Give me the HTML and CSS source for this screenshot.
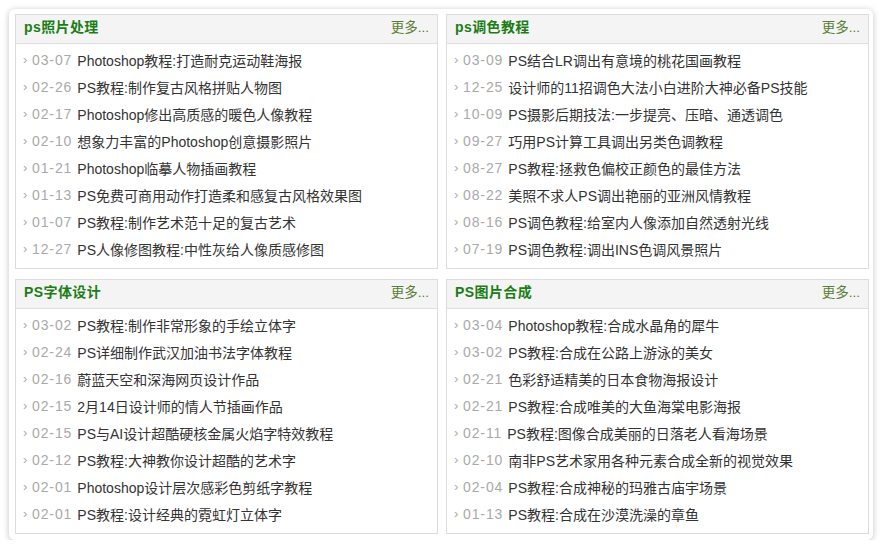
FILE: index.html
```html
<!DOCTYPE html>
<html lang="zh">
<head>
<meta charset="utf-8">
<title>PS教程</title>
<link rel="stylesheet" href="styles.css">
</head>
<body>
<div class="wrap">
  <section class="panel">
    <div class="head"><h2>ps照片处理</h2><a class="more">更多...</a></div>
    <ul class="list">
      <li><span class="arr">›</span><span class="date">03-07</span><span class="t">Photoshop教程:打造耐克运动鞋海报</span></li>
      <li><span class="arr">›</span><span class="date">02-26</span><span class="t">PS教程:制作复古风格拼贴人物图</span></li>
      <li><span class="arr">›</span><span class="date">02-17</span><span class="t">Photoshop修出高质感的暖色人像教程</span></li>
      <li><span class="arr">›</span><span class="date">02-10</span><span class="t">想象力丰富的Photoshop创意摄影照片</span></li>
      <li><span class="arr">›</span><span class="date">01-21</span><span class="t">Photoshop临摹人物插画教程</span></li>
      <li><span class="arr">›</span><span class="date">01-13</span><span class="t">PS免费可商用动作打造柔和感复古风格效果图</span></li>
      <li><span class="arr">›</span><span class="date">01-07</span><span class="t">PS教程:制作艺术范十足的复古艺术</span></li>
      <li><span class="arr">›</span><span class="date">12-27</span><span class="t">PS人像修图教程:中性灰给人像质感修图</span></li>
    </ul>
  </section>
  <section class="panel">
    <div class="head"><h2>ps调色教程</h2><a class="more">更多...</a></div>
    <ul class="list">
      <li><span class="arr">›</span><span class="date">03-09</span><span class="t">PS结合LR调出有意境的桃花国画教程</span></li>
      <li><span class="arr">›</span><span class="date">12-25</span><span class="t">设计师的11招调色大法小白进阶大神必备PS技能</span></li>
      <li><span class="arr">›</span><span class="date">10-09</span><span class="t">PS摄影后期技法:一步提亮、压暗、通透调色</span></li>
      <li><span class="arr">›</span><span class="date">09-27</span><span class="t">巧用PS计算工具调出另类色调教程</span></li>
      <li><span class="arr">›</span><span class="date">08-27</span><span class="t">PS教程:拯救色偏校正颜色的最佳方法</span></li>
      <li><span class="arr">›</span><span class="date">08-22</span><span class="t">美照不求人PS调出艳丽的亚洲风情教程</span></li>
      <li><span class="arr">›</span><span class="date">08-16</span><span class="t">PS调色教程:给室内人像添加自然透射光线</span></li>
      <li><span class="arr">›</span><span class="date">07-19</span><span class="t">PS调色教程:调出INS色调风景照片</span></li>
    </ul>
  </section>
  <section class="panel">
    <div class="head"><h2>PS字体设计</h2><a class="more">更多...</a></div>
    <ul class="list">
      <li><span class="arr">›</span><span class="date">03-02</span><span class="t">PS教程:制作非常形象的手绘立体字</span></li>
      <li><span class="arr">›</span><span class="date">02-24</span><span class="t">PS详细制作武汉加油书法字体教程</span></li>
      <li><span class="arr">›</span><span class="date">02-16</span><span class="t">蔚蓝天空和深海网页设计作品</span></li>
      <li><span class="arr">›</span><span class="date">02-15</span><span class="t">2月14日设计师的情人节插画作品</span></li>
      <li><span class="arr">›</span><span class="date">02-15</span><span class="t">PS与AI设计超酷硬核金属火焰字特效教程</span></li>
      <li><span class="arr">›</span><span class="date">02-12</span><span class="t">PS教程:大神教你设计超酷的艺术字</span></li>
      <li><span class="arr">›</span><span class="date">02-01</span><span class="t">Photoshop设计层次感彩色剪纸字教程</span></li>
      <li><span class="arr">›</span><span class="date">02-01</span><span class="t">PS教程:设计经典的霓虹灯立体字</span></li>
    </ul>
  </section>
  <section class="panel">
    <div class="head"><h2>PS图片合成</h2><a class="more">更多...</a></div>
    <ul class="list">
      <li><span class="arr">›</span><span class="date">03-04</span><span class="t">Photoshop教程:合成水晶角的犀牛</span></li>
      <li><span class="arr">›</span><span class="date">03-02</span><span class="t">PS教程:合成在公路上游泳的美女</span></li>
      <li><span class="arr">›</span><span class="date">02-21</span><span class="t">色彩舒适精美的日本食物海报设计</span></li>
      <li><span class="arr">›</span><span class="date">02-21</span><span class="t">PS教程:合成唯美的大鱼海棠电影海报</span></li>
      <li><span class="arr">›</span><span class="date">02-11</span><span class="t">PS教程:图像合成美丽的日落老人看海场景</span></li>
      <li><span class="arr">›</span><span class="date">02-10</span><span class="t">南非PS艺术家用各种元素合成全新的视觉效果</span></li>
      <li><span class="arr">›</span><span class="date">02-04</span><span class="t">PS教程:合成神秘的玛雅古庙宇场景</span></li>
      <li><span class="arr">›</span><span class="date">01-13</span><span class="t">PS教程:合成在沙漠洗澡的章鱼</span></li>
    </ul>
  </section>
</div>
</body>
</html>
```

FILE: styles.css
```css
* { box-sizing: border-box; }
html, body { margin: 0; padding: 0; background: #ffffff; }
body {
  font-family: "Liberation Sans", "Noto Sans CJK SC", sans-serif;
  font-size: 14px;
  color: #333;
}
.wrap {
  margin: 9px 0 0 9px;
  width: 864px;
  padding: 5px 4px 6px 6px;
  background: #fff;
  border-radius: 6px;
  box-shadow: 0 1px 6px rgba(0, 0, 0, 0.24);
  display: grid;
  grid-template-columns: 423px 423px;
  column-gap: 8px;
  row-gap: 10px;
}
.panel {
  border: 1px solid #dcdcdc;
  background: #fff;
}
.head {
  height: 29px;
  background: #f4f4f4;
  border-bottom: 1px solid #dedede;
  display: flex;
  align-items: center;
  justify-content: space-between;
  padding: 0 8px 6px 8px;
}
.head h2 {
  margin: 0;
  font-size: 14px;
  font-weight: bold;
  color: #1b7d16;
  letter-spacing: 0.4px;
}
.more {
  color: #5a7d35;
  font-size: 13.5px;
}
.list {
  list-style: none;
  margin: 0;
  padding: 2px 0 6px 7px;
}
.list li {
  height: 27px;
  display: flex;
  align-items: center;
  white-space: nowrap;
}
.arr {
  color: #aaa;
  font-size: 13px;
  width: 9px;
}
.date {
  color: #a9a9a9;
  letter-spacing: 0.9px;
  margin-right: 5px;
}
.t { color: #333; }
```
